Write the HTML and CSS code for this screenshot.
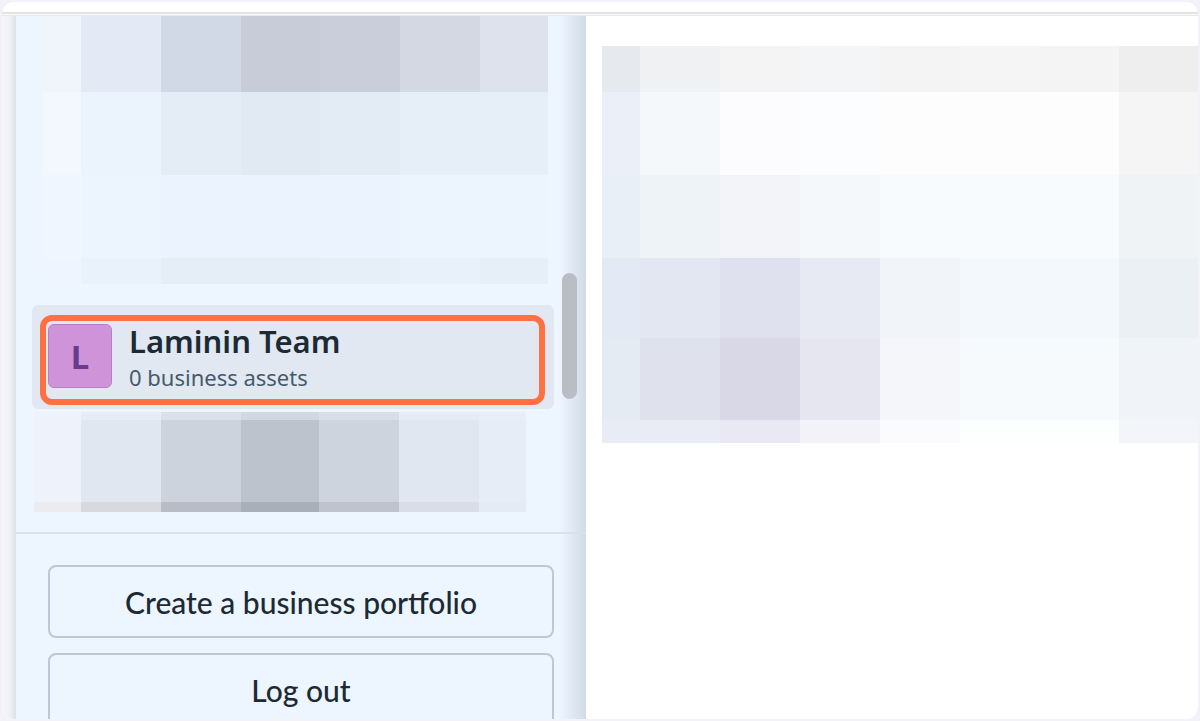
FILE: index.html
```html
<!DOCTYPE html>
<html lang="en">
<head>
<meta charset="utf-8">
<title>Business portfolios</title>
<link rel="stylesheet" href="styles.css">
</head>
<body>
<div class="window">
  <div class="topbar"></div>
  <div class="topline"></div>
  <div class="content">
    <div class="edge"></div>
    <aside class="sidebar">
      <div class="list">
        <div class="blur blur-top">
          <div class="t1"></div>
          <div class="t2"></div>
          <div class="t3"></div>
          <div class="t4"></div>
        </div>
        <div class="selected">
          <div class="highlight">
            <div class="avatar">L</div>
            <div class="info">
              <div class="name">Laminin Team</div>
              <div class="assets">0 business assets</div>
            </div>
          </div>
        </div>
        <div class="blur blur-bottom">
          <div class="b1"></div>
          <div class="b2"></div>
          <div class="b3"></div>
        </div>
        <div class="scrollbar"></div>
      </div>
      <div class="actions">
        <button class="action">Create a business portfolio</button>
        <button class="action">Log out</button>
      </div>
    </aside>
    <main class="main">
      <div class="blur blur-main">
        <div class="m1"></div>
        <div class="m2"></div>
        <div class="m3"></div>
        <div class="m4"></div>
        <div class="m5"></div>
        <div class="m6"></div>
      </div>
    </main>
  </div>
</div>
</body>
</html>
```
FILE: styles.css
```css
* { box-sizing: border-box; }
html, body { margin: 0; height: 100%; }
body {
  background: #f3f2f8;
  padding: 2px 2px 2px 2px;
  overflow: hidden;
  font-family: "Noto Sans", sans-serif;
}
.window {
  height: 717px;
  background: #fff;
  border-radius: 12px;
  overflow: hidden;
  display: flex;
  flex-direction: column;
}
.topbar {
  height: 12px;
  flex: none;
  border-bottom: 2px solid #e4e4e4;
  padding-top: 10px;
}
.topline {
  height: 2px;
  flex: none;
  background: #fafafa;
  border-bottom: 1px solid #e8e8e8;
}
.content { flex: 1; display: flex; min-height: 0; }
.edge {
  width: 14px;
  flex: none;
  background: linear-gradient(90deg, #f7f6fa 0, #f1f2f6 50%, #dde2e7 100%);
}
.sidebar {
  width: 570px;
  flex: none;
  display: flex;
  flex-direction: column;
  overflow: hidden;
  background: linear-gradient(90deg, rgba(210,218,230,0) 0, #d2dae6 100%) right top / 26px 100% no-repeat #edf5ff;
}
.list {
  position: relative;
  height: 518px;
  flex: none;
  border-bottom: 2px solid #d9e1ec;
}
.blur-top { margin-left: 26px; width: 506px; }
.t1 { height: 76px; background: linear-gradient(90deg, #f0f5fc 0 39px, #e3e9f5 39px 119px, #d2d9e6 119px 199px, #c8ccd8 199px 278px, #cacdda 278px 358px, #d3d8e3 358px 438px, #dde2ec 438px); }
.t2 { height: 83px; background: linear-gradient(90deg, #f3f8ff 0 39px, #ebf3fd 39px 119px, #e4ecf6 119px 199px, #e1e9f2 199px 278px, #e3ebf5 278px 358px, #e6eef8 358px); }
.t3 { height: 83px; background: linear-gradient(90deg, #eff6ff 0 39px, #ecf4fe 39px 119px, #ebf3fe 119px 358px, #ecf4fe 358px); }
.t4 { height: 26px; background: linear-gradient(90deg, #eff5fe 0 39px, #e9f1fa 39px 119px, #e5edf6 119px 278px, #e6eef8 278px 358px, #e8f0f9 358px 438px, #e6eef8 438px); }
.selected {
  margin: 21px 0 3px 16px;
  width: 522px;
  height: 104px;
  padding: 10px 9px 4px 8px;
  background: #e1e8f2;
  border-radius: 6px;
}
.highlight {
  height: 90px;
  border: 6px solid #ff7043;
  border-radius: 12px;
  display: flex;
  align-items: center;
  gap: 17px;
  padding: 0 0 8px 2px;
}
.avatar {
  width: 64px;
  height: 64px;
  flex: none;
  background: #ce93d8;
  border: 1px solid #b97fc6;
  border-radius: 6px;
  display: flex;
  align-items: center;
  justify-content: center;
  color: #6a3a8e;
  font-weight: 700;
  font-size: 33px;
  line-height: 1;
}
.info { display: flex; flex-direction: column; margin-top: 2px; }
.name {
  font-size: 31px;
  font-weight: 600;
  line-height: 36px;
  color: #1c2b33;
}
.assets {
  font-size: 22px;
  line-height: 30px;
  margin-top: 3px;
  color: #465a69;
}
.blur-bottom { margin-left: 18px; width: 492px; }
.b1 { height: 8px; background: linear-gradient(90deg, #ecf3fd 0 47px, #e6edf7 47px 127px, #dae1eb 127px 207px, #d0d8e2 207px 285px, #d7dee8 285px 365px, #e5ecf6 365px 445px, #e8eef8 445px); }
.b2 { height: 82px; background: linear-gradient(90deg, #eef3fb 0 47px, #e1e7f0 47px 127px, #cdd3dd 127px 207px, #bcc3cd 207px 285px, #cdd4dd 285px 365px, #e1e7f0 365px 445px, #e7edf7 445px); }
.b3 { height: 10px; background: linear-gradient(90deg, #ececf0 0 47px, #d8d9de 47px 127px, #b7bcc5 127px 207px, #a9afb9 207px 285px, #bfc4cc 285px 365px, #d8dde6 365px 445px, #e5ebf4 445px); }
.scrollbar {
  position: absolute;
  left: 546px;
  top: 257px;
  width: 15px;
  height: 126px;
  border-radius: 8px;
  background: #b9bec4;
}
.actions {
  flex: none;
  display: flex;
  flex-direction: column;
  gap: 15px;
  padding: 31px 32px 0 32px;
}
.action {
  height: 73px;
  flex: none;
  width: 506px;
  background: #edf5ff;
  border: 2px solid #bcc8d6;
  border-radius: 8px;
  font-family: "Lato", sans-serif;
  font-size: 30px;
  font-weight: 500;
  color: #1c2b33;
  padding: 0;
}
.main { flex: 1; min-width: 0; padding: 30px 0 0 16px; }
.m1 { height: 46px; background: linear-gradient(90deg, #e6e9ee 0 38px, #f0f1f3 38px 118px, #f4f4f4 118px 198px, #f4f5f7 198px 278px, #f4f4f4 278px 358px, #f5f5f5 358px 438px, #f4f4f4 438px 517px, #eeeeee 517px); }
.m2 { height: 83px; background: linear-gradient(90deg, #ebeff7 0 38px, #f4f8fb 38px 118px, #fcfcfe 118px 198px, #fcfdff 198px 278px, #fdfdfe 278px 517px, #f5f5f5 517px); }
.m3 { height: 83px; background: linear-gradient(90deg, #e9eff7 0 38px, #eef3f7 38px 118px, #f2f4f9 118px 198px, #f4f8fb 198px 278px, #f8fbfe 278px 517px, #eff3f6 517px); }
.m4 { height: 80px; background: linear-gradient(90deg, #e3eaf5 0 38px, #e3e7f2 38px 118px, #dfe2ee 118px 198px, #e7eaf3 198px 278px, #f1f4f9 278px 358px, #f3f8fc 358px 517px, #eaf0f4 517px); }
.m5 { height: 82px; background: linear-gradient(90deg, #e5ebf3 0 38px, #dfe2ed 38px 118px, #d8d8e7 118px 198px, #e6e6f0 198px 278px, #f5f6fa 278px 358px, #f7fafd 358px 517px, #f0f3f7 517px); }
.m6 { height: 23px; background: linear-gradient(90deg, #e8edf5 0 38px, #e9ecf5 38px 118px, #eae9f3 118px 198px, #f3f2f8 198px 278px, #fbfbfd 278px 358px, #fdfefe 358px 517px, #f4f5f8 517px); }
```
